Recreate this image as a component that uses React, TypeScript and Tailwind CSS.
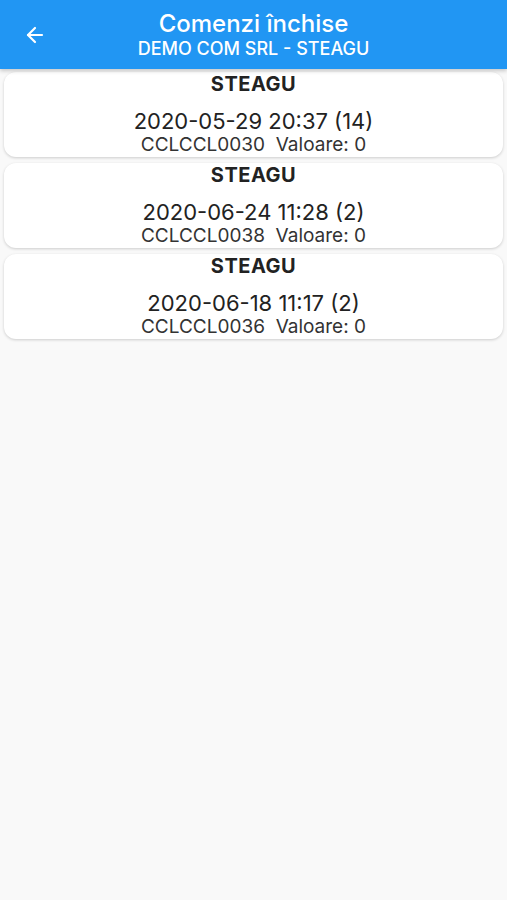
import { ArrowLeft } from "lucide-react";

interface Order {
  client: string;
  date: string;
  count: number;
  code: string;
  value: number;
}

const orders: Order[] = [
  { client: "STEAGU", date: "2020-05-29 20:37", count: 14, code: "CCLCCL0030", value: 0 },
  { client: "STEAGU", date: "2020-06-24 11:28", count: 2, code: "CCLCCL0038", value: 0 },
  { client: "STEAGU", date: "2020-06-18 11:17", count: 2, code: "CCLCCL0036", value: 0 },
];

export default function App() {
  return (
    <div className="min-h-[900px] bg-[#f9f9f9] font-['Inter',sans-serif]">
      <header className="relative flex h-[69px] flex-col items-center justify-center bg-[#2196f3] text-white shadow-[0_2px_4px_rgba(0,0,0,0.2)]">
        <button className="absolute left-[23px] top-[23px]">
          <ArrowLeft className="h-[24px] w-[24px]" strokeWidth={2.2} />
        </button>
        <h1 className="text-[24px] leading-[28px] font-medium">Comenzi închise</h1>
        <p className="text-[18px] leading-[22px] font-medium">DEMO COM SRL - STEAGU</p>
      </header>

      <div className="flex flex-col gap-[6px] px-[4px] pt-[3px]">
        {orders.map((o, idx) => (
          <div
            key={idx}
            className="flex h-[85px] flex-col items-center rounded-[12px] bg-white text-[#222] shadow-[0_1px_3px_rgba(0,0,0,0.18)]"
          >
            <div className="mt-[0px] text-[20px] leading-[24px] font-bold tracking-[0.5px]">{o.client}</div>
            <div className="mt-[12px] text-[22px] leading-[26px]">
              {o.date} ({o.count})
            </div>
            <div className="text-[19px] leading-[22px] text-[#333]">
              {o.code}&nbsp;&nbsp;Valoare: {o.value}
            </div>
          </div>
        ))}
      </div>
    </div>
  );
}
